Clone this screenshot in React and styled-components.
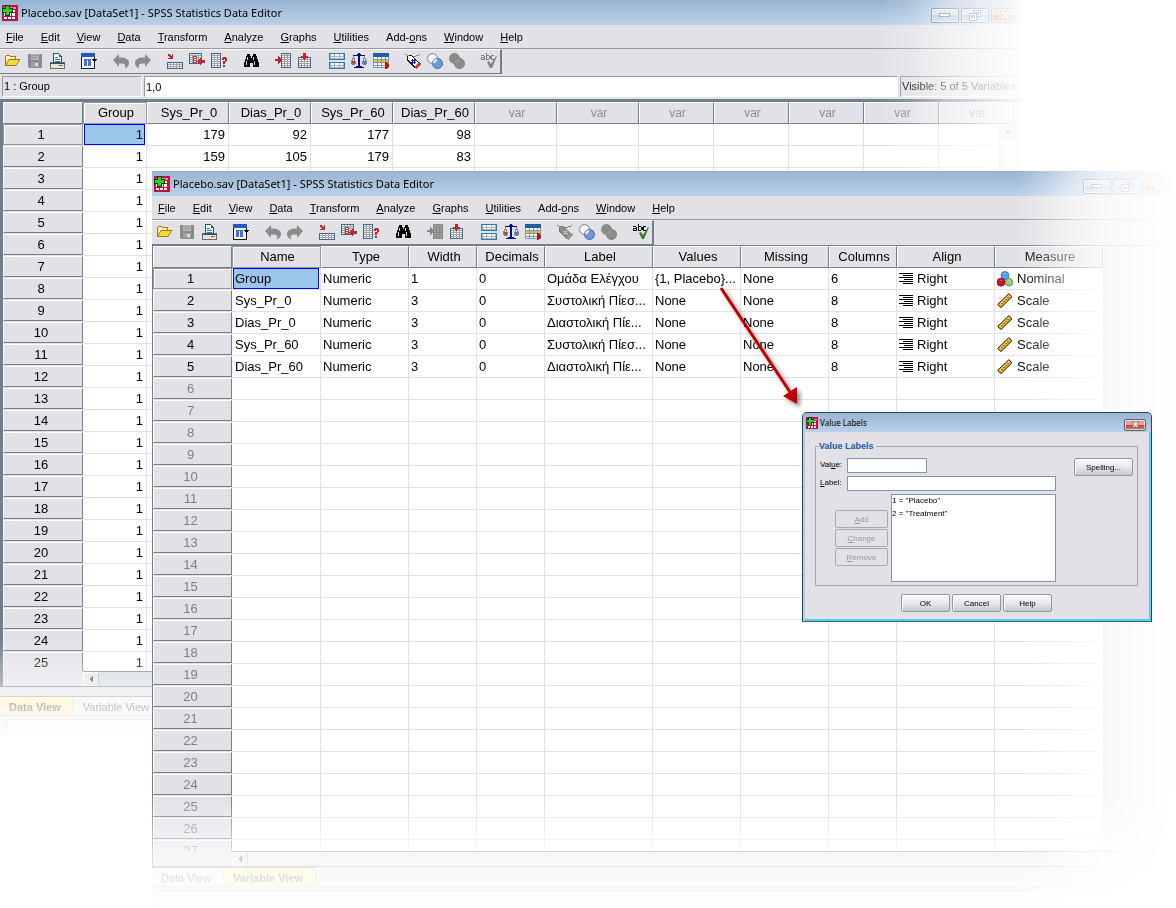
import React from 'react';
import styled, {createGlobalStyle, css} from 'styled-components';

const GlobalStyle = createGlobalStyle`
* {
    box-sizing: border-box;
}
body {
    margin: 0;
    background: #fff;
    color: #000;
    font-family: "Liberation Sans", Arial, sans-serif;
    font-size: 11px;
}
button, input, select {
    font: inherit;
    color: inherit;
}
`;

const FACE = '#e2e1e6';
const EDGE = '#6f7f90';
const LINE = '#e2e2e6';

//* Desktop and windows
const Desktop = styled.main`
position: relative;
min-height: 100vh;
overflow: hidden;
`;

//* both editor windows fade out to the right and to the bottom
const backFade = css`
mask-image:
    linear-gradient(to right, #000 calc(100% - 146px), rgba(0,0,0,.82) calc(100% - 114px), rgba(0,0,0,.48) calc(100% - 80px), rgba(0,0,0,.25) calc(100% - 42px), rgba(0,0,0,.08) calc(100% - 8px), transparent),
    linear-gradient(to bottom, #000 calc(100% - 100px), rgba(0,0,0,.75) calc(100% - 78px), rgba(0,0,0,.34) calc(100% - 36px), rgba(0,0,0,.18) calc(100% - 20px), transparent);
`;
const frontFade = css`
mask-image:
    linear-gradient(to right, #000 calc(100% - 158px), rgba(0,0,0,.7) calc(100% - 130px), rgba(0,0,0,.38) calc(100% - 100px), rgba(0,0,0,.2) calc(100% - 74px), rgba(0,0,0,.07) calc(100% - 26px), transparent),
    linear-gradient(to bottom, #000 calc(100% - 113px), rgba(0,0,0,.55) calc(100% - 80px), rgba(0,0,0,.32) calc(100% - 60px), rgba(0,0,0,.15) calc(100% - 30px), transparent);
`;

const EditorWindow = styled.section`
position: absolute;
top: ${p => p.$front ? '171px' : '0'};
left: ${p => p.$front ? '152px' : '0'};
right: ${p => p.$front ? '0' : '152px'};
background: ${FACE};
overflow: hidden;
${p => p.$front ? frontFade : backFade}
mask-composite: intersect;
`;

const TitleBar = styled.header`
display: flex;
align-items: center;
gap: 3px;
height: 25px;
padding: 0 5px 0 2px;
background: linear-gradient(#98b3d1, #b9d1ea);
`;

const Title = styled.h1`
flex: 1;
margin: 0;
font: 11px/16px "Noto Sans", "Open Sans", sans-serif;
white-space: nowrap;
`;

const Captions = styled.div`
display: flex;
gap: 2px;
margin-top: 5px;
`;

const CaptionButton = styled.button`
display: flex;
align-items: center;
justify-content: center;
width: 28px;
height: 15px;
padding: 0;
border: 1px solid #51647c;
border-radius: 2px;
box-shadow: inset 0 0 0 1px rgba(255,255,255,.6);
background: ${p => p.$close
        ? 'linear-gradient(#e5a294 45%, #c4422c 50%, #d98068)'
        : 'linear-gradient(#c6d8ec 45%, #9db8d6 50%, #bcd2ea)'};
`;

const MenuBar = styled.nav`
display: flex;
gap: 17px;
height: 24px;
padding: 0 6px;
border-bottom: 1px solid #98989c;
`;

const MenuItem = styled.button`
padding: 0;
border: 0;
background: none;
font-size: 11px;
line-height: 14px;
white-space: nowrap;
`;

const ToolStrip = styled.div`
display: flex;
width: max-content;
gap: 16px;
height: 25px;
padding: 3px 3px 0 5px;
border-top: 1px solid #fff;
border-right: 2px solid ${EDGE};
border-bottom: 1px solid ${EDGE};
`;

const ToolGroup = styled.div`
display: flex;
gap: 6px;
`;

const ToolButton = styled.button`
width: 16px;
height: 16px;
padding: 0;
border: 0;
background: none;
svg {
    display: block;
}
`;

const CellBar = styled.div`
display: flex;
gap: 2px;
padding: 2px 0 2px 2px;
line-height: 19px;
`;

const sunken = css`
height: 21px;
border: 1px solid #98989c;
border-right-color: #fff;
border-bottom-color: #fff;
white-space: nowrap;
overflow: hidden;
`;

const CellName = styled.output`
${sunken}
width: 140px;
padding-left: 1px;
`;

const CellInput = styled.input`
${sunken}
flex: 1;
min-width: 0;
padding: 0 0 0 1px;
background: #fff;
`;

const VisibleCount = styled.div`
${sunken}
width: 124px;
padding-left: 1px;
`;

//* Spreadsheet
const Sheet = styled.div`
position: relative;
border-left: ${p => p.$front ? '1px' : '3px'} solid ${EDGE};
border-top: ${p => p.$front ? '1px' : '3px'} solid ${EDGE};
border-bottom: 1px solid ${EDGE};
`;

const SheetView = styled.div`
height: ${p => p.$height}px;
overflow: hidden;
`;

const Grid = styled.table`
table-layout: fixed;
width: ${p => p.$width}px;
border-collapse: separate;
border-spacing: 0;
background: #fff;
font-size: 13px;
line-height: 20px;
white-space: nowrap;
`;

const raised = css`
border: 1px solid #fff;
border-right-color: ${EDGE};
border-bottom-color: ${EDGE};
`;
const picked = css`
border: 1px solid #98989c;
box-shadow: inset 1px 1px 0 #fff;
`;

const ColumnHead = styled.th`
height: 22px;
padding: 0 0 0 2px;
background: ${FACE};
font-weight: normal;
font-size: ${p => p.$unused ? '12px' : '13px'};
color: ${p => p.$unused ? '#8c8c90' : '#000'};
${p => p.$picked ? picked : raised}
`;

const RowHead = styled.th`
height: 22px;
padding: 0;
border-bottom: 1px solid ${LINE};
background: ${FACE};
font-weight: normal;
color: ${p => p.$unused ? '#808084' : '#000'};
`;

const RowFace = styled.div`
height: 21px;
padding-right: 4px;
line-height: 19px;
${p => p.$picked ? picked : raised}
`;

const Cell = styled.td`
height: 22px;
padding: 0 ${p => p.$picked ? '1px' : '3px'} 0 ${p => p.$picked ? '1px' : p.$name ? '3px' : '2px'};
border-right: 1px solid ${LINE};
border-bottom: 1px solid ${LINE};
text-align: ${p => p.$number ? 'right' : 'left'};
overflow: hidden;
svg {
    flex: none;
}
`;

const PickedBox = styled.div`
height: 21px;
padding: 0 1px;
border: 1px solid #0000f0;
background: #9cc5ec;
line-height: 20px;
`;

const IconText = styled.span`
display: flex;
align-items: center;
gap: 4px;
`;

const HScroll = styled.div`
display: flex;
height: 15px;
margin-left: ${p => p.$front ? '79px' : '80px'};
border-top: 1px solid ${EDGE};
background: ${p => p.$front ? '#e4e4e6' : '#cfd9dc'};
`;

const ScrollArrow = styled.button`
display: flex;
align-items: center;
justify-content: center;
width: 16px;
height: 14px;
padding: 0;
border: 1px solid #fff;
border-right-color: #9cb0b8;
border-bottom-color: ${p => p.$up ? '#9cb0b8' : '#fff'};
background: ${FACE};
`;

//* the scroll bar lies over the last column
const VScroll = styled.div`
position: absolute;
top: 22px;
bottom: 15px;
right: 9px;
width: 16px;
border-left: 1px solid #b8c0c6;
background: #e0eaea;
`;

const TabStrip = styled.div`
display: flex;
height: ${p => p.$front ? '20px' : '29px'};
padding-top: ${p => p.$front ? '0' : '9px'};
border-bottom: 1px solid #b0b0b4;
`;

const Tab = styled.button`
height: 19px;
padding: 1px 12px 0 9px;
border: 0;
border-top: 1px solid #98989c;
border-right: 1px solid #c0c0c4;
background: ${p => p.$active ? 'linear-gradient(#fff8b0, #ffdf9c)' : '#f0f0f2'};
font-weight: ${p => p.$active ? 'bold' : 'normal'};
color: #303030;
`;

const StatusBar = styled.footer`
height: 21px;
margin: 3px 0 0 6px;
border: 1px solid #a8a8ac;
border-bottom: 0;
background: #f0f0f2;
`;

//* Dialog
const Dialog = styled.section`
position: absolute;
top: 412px;
left: 802px;
width: 350px;
border: 1px solid #27475c;
border-bottom-color: #1c6f8c;
border-radius: 5px 5px 0 0;
background: ${FACE};
box-shadow: inset 2px 0 0 #b4cde6, inset -2px 0 0 #63cbea, inset 0 -2px 0 #63cbea;
font-size: 8px;
`;

const DialogTitle = styled.header`
display: flex;
align-items: center;
gap: 2px;
height: 19px;
padding: 0 5px 0 3px;
border-radius: 4px 4px 0 0;
background: linear-gradient(#9ab4d2, #b9d1ea);
font-family: "Noto Sans", "Open Sans", sans-serif;
h2 {
    flex: 1;
    margin: 0;
    font-size: 8px;
    font-weight: normal;
}
`;

const DialogClose = styled(CaptionButton)`
width: 22px;
height: 12px;
margin-top: 4px;
`;

const DialogBody = styled.form`
padding: 9px 13px 9px 12px;
`;

const Group = styled.fieldset`
display: grid;
grid-template-columns: 27px 44px 1fr 77px;
row-gap: 3px;
min-width: 0;
height: 145px;
margin: 0;
padding: 6px 4px 4px 4px;
border: 1px solid #a6a6ac;
align-content: start;
legend {
    padding: 0 2px 0 0;
    margin-left: -1px;
    color: #2258a8;
    font-size: 9px;
    font-weight: bold;
    line-height: 11px;
}
label {
    line-height: 14px;
}
`;

const TextBox = styled.input`
grid-column: 2 / 4;
width: ${p => p.$short ? '80px' : '100%'};
height: 15px;
padding: 0 1px;
border: 1px solid #8497a8;
outline: none;
background: #fff;
`;

const PushButton = styled.button`
width: ${p => p.$wide ? '59px' : '49px'};
height: 18px;
padding: 0;
border: 1px solid #8c98a6;
border-radius: 2px;
background: linear-gradient(#fafafb, #e8e8ec 50%, #c8c9d0);
box-shadow: inset 1px 1px 0 #fff;
font-size: 8px;
&:disabled {
    width: 53px;
    border-color: #a8a8ae;
    background: ${FACE};
    box-shadow: none;
    color: #98989c;
}
`;

//the button may hang a little below its row
const Spelling = styled.div`
display: flex;
justify-content: flex-end;
height: 15px;
`;

const EditButtons = styled.div`
grid-column: 1 / 3;
display: flex;
flex-direction: column;
align-items: flex-end;
gap: 1px;
padding: 16px 3px 0 0;
`;

const LabelList = styled.select`
height: 88px;
padding: 1px 0;
border: 1px solid #8497a8;
border-radius: 0;
background: #fff;
overflow: hidden;
option {
    min-height: 13px;
    padding: 0;
    line-height: 13px;
}
`;

const DialogActions = styled.div`
display: flex;
justify-content: center;
gap: 2px;
padding-top: 8px;
`;

const Pointer = styled.svg`
position: absolute;
top: 280px;
left: 712px;
filter: drop-shadow(3px 3px 2px rgba(0,0,0,.45));
pointer-events: none;
`;

//* Icons
const Svg = ({size = 16, w, h, box, children}) => (
    <svg width={w || size} height={h || size} viewBox={box || '0 0 16 16'} shapeRendering="crispEdges" aria-hidden="true">
        {children}
    </svg>
);

const AppIcon = ({size}) => (
    <Svg size={size}>
        <rect width="16" height="16" fill="#c4103c"/>
        <path d="M2 5h12v9h-12z" fill="#fff"/>
        <path d="M2 2h12v2h-12z" fill="#e78aa0"/>
        <path d="M5 4h1v11h-1zM9 4h1v11h-1zM13 4h1v11h-1zM1 7h14v1h-14zM1 11h14v1h-14z" fill="#c4103c"/>
        <path d="M3 0h5v3h3v5h-3v3h-5v-3h-3v-5h3z" fill="#0b3b0b"/>
        <path d="M4 1h3v3h3v3h-3v3h-3v-3h-3v-3h3z" fill="#2fd024"/>
    </Svg>
);

const OpenIcon = () => (
    <Svg>
        <path d="M.5 12.500V3.500l1-1h3l1 1h5v3" fill="#fff3b0" stroke="#a8731c"/>
        <path d="M.5 12.500l3.500-6h11l-4 6z" fill="#f6da3c" stroke="#a8731c" shapeRendering="auto"/>
    </Svg>
);

const SaveIcon = () => (
    <Svg>
        <path d="M1 1h14v14h-13l-1-1z" fill="#8b8b8b"/>
        <path d="M4 1h8v6h-8z" fill="#b4b4b6"/>
        <path d="M5 2h6v1h-6zM5 4h6v1h-6z" fill="#9a9a9a"/>
        <path d="M4 9h8v5h-8z" fill="#a2a2a4"/>
        <path d="M8 10h3v3h-3z" fill="#dcdcde"/>
    </Svg>
);

const PrintIcon = () => (
    <Svg>
        <path d="M1 9h14v6h-14z" fill="#e6e2dc" stroke="#6c6c6c"/>
        <path d="M1 10h15v1h-15z" fill="#4c4c4c"/>
        <path d="M4.500 9.500v-9h5l3 3v6z" fill="#fff" stroke="#24558c"/>
        <path d="M9 1h1v3h3v-1h-2v-2z" fill="#24558c"/>
        <path d="M6 4h3v1h-3zM6 6h5v1h-5zM6 8h5v1h-5z" fill="#3a7cc0"/>
        <path d="M10 12h2v1h-2z" fill="#d03030"/>
        <path d="M12 12h2v1h-2z" fill="#38b038"/>
    </Svg>
);

const RecallIcon = () => (
    <Svg>
        <path d="M1 4h13v12h-13z" fill="#f4f4f8"/>
        <path d="M0 0h14v4h-14z" fill="#2458c0"/>
        <path d="M0 4h1v11h-1zM13 4h1v3h-1zM0 15h14v1h-14zM13 9h1v7h-1z" fill="#1c1c1c"/>
        <path d="M3 6h7v1h-7zM3 7h3v6h-3zM7 7h3v6h-3z" fill="#3c74d8"/>
        <path d="M11 6h5v1h-1v1h-1v1h-1v-1h-1v-1h-1z" fill="#000"/>
    </Svg>
);

const UndoIcon = ({flip}) => (
    <Svg>
        <path
            transform={flip ? 'translate(16 0) scale(-1 1)' : undefined}
            d="M0 7l6-6v3.500c6-.5 10 1.500 10 5.500 0 2.500-1.500 4.500-4.500 5.500 2-3.500.5-5.500-5.500-5v3.500z"
            fill="#8b8b8b"
            shapeRendering="auto"/>
    </Svg>
);

//small data table used by many of the icons
const Sheetlet = ({x, y, cols, rows, line = '#a2a2a4', frame = '#3c6898'}) => {
    const w = cols * 3 + 1;
    const h = rows * 2 + 1;
    return (
        <g>
            <rect x={x} y={y} width={w} height={h} fill={line}/>
            {Array.from({length: cols * rows}, (_, i) => (
                <rect key={i} x={x + 1 + (i % cols) * 3} y={y + 1 + Math.floor(i / cols) * 2} width="2" height="1" fill="#fff"/>
            ))}
            <path d={`M${x} ${y}h${w}v${h}h-${w}zM${x + 1} ${y + 1}v${h - 2}h${w - 2}v-${h - 2}z`} fill={frame} fillRule="evenodd"/>
        </g>
    );
};

const GotoCaseIcon = () => (
    <Svg>
        <Sheetlet x={0} y={9} cols={5} rows={3}/>
        <path d="M1 1h2v1h1v1h1v-2h1v5h-5v-1h2v-1h-1v-1h-1z" fill="#c8202c"/>
    </Svg>
);

const GotoVariableIcon = () => (
    <Svg>
        <Sheetlet x={0} y={0} cols={4} rows={5}/>
        <path d="M4 3h4v7h-4z" fill="#b04048"/>
        <path d="M5 4h2v1h-2zM5 6h2v1h-2zM5 8h2v1h-2z" fill="#fff"/>
        <path d="M8 8l4-4v3h4v3h-4v3z" fill="#c8202c"/>
    </Svg>
);

const VariablesIcon = () => (
    <Svg>
        <Sheetlet x={0} y={0} cols={3} rows={7}/>
        <path d="M11 5h1v-1h3v1h1v3h-1v1h-1v2h-2v-3h2v-2h-1v1h-2zM12 12h2v2h-2z" fill="#c8202c"/>
    </Svg>
);

const FindIcon = () => (
    <Svg>
        <path d="M4 1h3v2h1v2h1v-2h1v-2h3v2h1v3h1v3h1v5h-6v-4h-3v4h-6v-5h1v-3h1v-3h1z" fill="#050505"/>
        <path d="M4 4h1v3h-1zM3 8h1v4h-1zM10 4h1v3h-1zM11 8h1v4h-1z" fill="#d8d8d8"/>
    </Svg>
);

const InsertCaseIcon = ({off}) => (
    <Svg>
        <Sheetlet x={6} y={0} cols={3} rows={7} frame={off ? '#808080' : undefined} line={off ? '#8a8a8a' : undefined}/>
        {off && <path d="M6 0h10v15h-10z" fill="#888" opacity=".75"/>}
        <path d="M0 6h3v-3h1v1h1v1h1v1h1v2h-1v1h-1v1h-1v1h-1v-3h-3z" fill={off ? '#858585' : '#c8202c'}/>
    </Svg>
);

const InsertVariableIcon = () => (
    <Svg>
        <Sheetlet x={1} y={4} cols={4} rows={5}/>
        <path d="M6 0h3v3h2v1h-1v1h-1v1h-1v1h-1v-1h-1v-1h-1v-1h-1v-1h2z" fill="#c8202c"/>
    </Svg>
);

const SplitIcon = () => (
    <Svg>
        <path d="M0 0h16v7h-16zM0 9h16v7h-16z" fill="#2a78b4"/>
        <path d="M1 1h14v5h-14zM1 10h14v5h-14z" fill="#a8b4bc"/>
        <path d="M2 1h3v2h-3zM6 1h4v2h-4zM11 1h3v2h-3zM2 4h3v1h-3zM6 4h4v1h-4zM11 4h3v1h-3zM2 10h3v2h-3zM6 10h4v2h-4zM11 10h3v2h-3zM2 13h3v1h-3zM6 13h4v1h-4zM11 13h3v1h-3z" fill="#fff"/>
    </Svg>
);

const WeightIcon = () => (
    <Svg>
        <path d="M2 3h1v2h1v3h1v2h-1v-2h-1v-2h-1v2h-1v2h-1v-3h1v-2h1zM13 3h1v2h1v2h1v3h-1v-2h-1v-2h-1v2h-1v2h-1v-2h1v-3h1z" fill="#8c8c92"/>
        <path d="M2 2h4v-1h1v-1h2v1h1v1h4v1h-5v10h2v1h2v1h-10v-1h2v-1h2v-10h-5z" fill="#000c88"/>
        <path d="M1 8h3v2h-3z" fill="#e02828"/>
        <path d="M12 8h3v2h-3z" fill="#3080e8"/>
        <path d="M0 10h5v1h-1v1h-3v-1h-1zM11 10h5v1h-1v1h-3v-1h-1z" fill="#7c7c84"/>
    </Svg>
);

const SelectIcon = () => (
    <Svg>
        <path d="M0 0h16v15h-16z" fill="#7c98b0"/>
        <path d="M0 0h16v4h-16z" fill="#2060a0"/>
        <path d="M1 4h3v2h-3zM5 4h3v2h-3zM9 4h3v2h-3zM13 4h2v2h-2zM1 10h3v2h-3zM5 10h3v2h-3zM9 10h3v2h-3zM1 13h3v1h-3zM5 13h3v1h-3zM9 13h3v1h-3z" fill="#fff"/>
        <path d="M1 7h3v2h-3zM5 7h3v2h-3zM9 7h3v2h-3zM13 7h2v2h-2z" fill="#f4c020"/>
        <path d="M12 9h2v1h1v1h1v3h-1v1h-1v1h-2z" fill="#c01018"/>
    </Svg>
);

const LabelsIcon = ({off}) => (
    <Svg>
        <path d="M2.500 2.500h4l7.500 7.500-4 4.500-7-7z" fill={off ? '#8c8c8c' : '#fff'} stroke={off ? '#7c7c7c' : '#181818'}/>
        <path d="M9 14l5-5 2 2-4.500 5z" fill={off ? '#9a9a9a' : '#d83838'}/>
        <path d="M0 1h2v1h2v1h-2v-1h-2zM8 3h3v-1h3v-1h1v1h-1v1h-3v1h-3z" fill="#8a8a8a"/>
        <path d="M7 6h1v5h-1zM9 6h1v5h-1zM6 7h5v1h-5zM6 9h5v1h-5z" fill={off ? '#b8b8b8' : '#1818a0'}/>
    </Svg>
);

const SetsIcon = ({off}) => (
    <svg width="16" height="16" viewBox="0 0 16 16" aria-hidden="true">
        <circle cx="5.500" cy="5.500" r="5" fill={off ? '#8b8b8b' : '#f4f6fa'} stroke={off ? '#8b8b8b' : '#76808c'}/>
        <circle cx="10.500" cy="10.500" r="5" fill={off ? '#8b8b8b' : '#6f9ad8'} stroke={off ? '#808080' : '#4c6c9c'}/>
        <path d="M5.800 10.400a5 5 0 0 1 4.600-4.700a5 5 0 0 1-4.600 4.700z" fill={off ? '#9a9a9a' : '#dce8f8'}/>
    </svg>
);

const SpellIcon = ({off}) => (
    <Svg>
        <path
            d="M0 2h3v1h1v4h-4v-3h3v-1h-3zM1 5v1h2v-1zM5 0h1v2h2v1h1v3h-1v1h-3zM6 3v3h2v-3zM10 2h3v1h-2v3h2v1h-3v-1h-1v-3h1z"
            fill={off ? '#808080' : '#101010'}
            fillRule="evenodd"/>
        <path d="M6 9l2-1 2 3 5-8h1l-5 12h-2z" fill={off ? '#808080' : '#3c7c28'} shapeRendering="auto"/>
    </Svg>
);

const AlignIcon = () => (
    <Svg w={14} h={12} box="0 0 14 12">
        <path d="M0 0h14v1h-14zM4 2h10v1h-10zM0 4h14v1h-14zM5 6h9v1h-9zM0 8h14v1h-14zM4 10h10v1h-10z" fill="#000"/>
    </Svg>
);

const NominalIcon = () => (
    <svg width="16" height="16" viewBox="0 0 16 16" aria-hidden="true">
        <circle cx="8" cy="4.500" r="4" fill="#5ba0ee" stroke="#2f68b0" strokeWidth=".8"/>
        <circle cx="4" cy="11.200" r="4" fill="#c8142c" stroke="#801020" strokeWidth=".8"/>
        <circle cx="12" cy="11.200" r="3.800" fill="#92d07c" stroke="#4c8c3c" strokeWidth=".8"/>
        <path d="M6.500 3a2 1.500 0 0 1 3 0zM2.500 9.500a2 1.500 0 0 1 3 0zM10.500 9.500a2 1.500 0 0 1 3 0z" fill="#fff" opacity=".6"/>
    </svg>
);

const ScaleIcon = () => (
    <svg width="16" height="16" viewBox="0 0 16 16" aria-hidden="true">
        <path d="M.7 11.500L11.800.7l3.200 3L4 14.500z" fill="#f0b820" stroke="#181400"/>
        <path d="M2.500 11.500L12 2.500" stroke="#fbe68c"/>
        <path d="M4.500 10l1 1M6.500 8l1 1M8.500 6l1 1M10.500 4l1 1" stroke="#181400"/>
    </svg>
);

const Minimize = () => (
    <Svg w={12} h={6} box="0 0 12 6">
        <path d="M.5 1.500h10v3h-10z" fill="#fff" stroke="#5a6270"/>
    </Svg>
);
const Restore = () => (
    <Svg w={12} h={11} box="0 0 12 11">
        <path d="M4.500.5h7v6h-7z" fill="#fff" stroke="#5a6270"/>
        <path d="M6.500 2.500h3v2h-3z" fill="#b8c8dc" stroke="#5a6270"/>
        <path d="M.5 3.500h7v7h-7z" fill="#fff" stroke="#5a6270"/>
        <path d="M2.500 5.500h3v2h-3z" fill="#b8c8dc" stroke="#5a6270"/>
    </Svg>
);
const Close = ({w = 12, h = 10}) => (
    <svg width={w} height={h} viewBox="0 0 12 10" aria-hidden="true">
        <path d="M1 1h3l2 2 2-2h3L8 5l3 4H8L6 7 4 9H1l3-4z" fill="#fff" stroke="#5c5058" strokeWidth=".9"/>
    </svg>
);

//* Data
const menus = [
    ['', 'F', 'ile'], ['', 'E', 'dit'], ['', 'V', 'iew'], ['', 'D', 'ata'], ['', 'T', 'ransform'], ['', 'A', 'nalyze'],
    ['', 'G', 'raphs'], ['', 'U', 'tilities'], ['Add-', 'o', 'ns'], ['', 'W', 'indow'], ['', 'H', 'elp']
];

const dataColumns = [
    {name: 'Group', width: 64},
    {name: 'Sys_Pr_0', width: 82},
    {name: 'Dias_Pr_0', width: 82},
    {name: 'Sys_Pr_60', width: 82},
    {name: 'Dias_Pr_60', width: 82},
    {width: 82}, {width: 82}, {width: 75}, {width: 75}, {width: 75}, {width: 75}, {width: 75}
];
const cases = [[1, 179, 92, 177, 98], [1, 159, 105, 179, 83]];
while (cases.length < 25) cases.push([1]);

const variableColumns = [
    ['Name', 89], ['Type', 88], ['Width', 68], ['Decimals', 68], ['Label', 108],
    ['Values', 88], ['Missing', 88], ['Columns', 68], ['Align', 98], ['Measure', 108]
];
const variables = [
    ['Group', 'Numeric', 1, 0, 'Ομάδα Ελέγχου', '{1, Placebo}...', 'None', 6, 'Right', 'Nominal'],
    ['Sys_Pr_0', 'Numeric', 3, 0, 'Συστολική Πίεσ...', 'None', 'None', 8, 'Right', 'Scale'],
    ['Dias_Pr_0', 'Numeric', 3, 0, 'Διαστολική Πίε...', 'None', 'None', 8, 'Right', 'Scale'],
    ['Sys_Pr_60', 'Numeric', 3, 0, 'Συστολική Πίεσ...', 'None', 'None', 8, 'Right', 'Scale'],
    ['Dias_Pr_60', 'Numeric', 3, 0, 'Διαστολική Πίε...', 'None', 'None', 8, 'Right', 'Scale']
];
const icons = {
    Right: <AlignIcon/>,
    Nominal: <NominalIcon/>,
    Scale: <ScaleIcon/>
};

const Hotkey = ({parts}) => <>{parts[0]}<u>{parts[1]}</u>{parts[2]}</>;

const WindowTop = ({front}) => {
    const tools = [
        [['Open', <OpenIcon/>], ['Save', <SaveIcon/>], ['Print', <PrintIcon/>]],
        [['Recall dialog', <RecallIcon/>]],
        [['Undo', <UndoIcon/>], ['Redo', <UndoIcon flip/>]],
        [['Go to case', <GotoCaseIcon/>], ['Go to variable', <GotoVariableIcon/>], ['Variables', <VariablesIcon/>]],
        [['Find', <FindIcon/>]],
        [['Insert case', <InsertCaseIcon off={front}/>], ['Insert variable', <InsertVariableIcon/>]],
        [['Split file', <SplitIcon/>], ['Weight cases', <WeightIcon/>], ['Select cases', <SelectIcon/>]],
        [['Value labels', <LabelsIcon off={front}/>], ['Use sets', <SetsIcon/>], ['Show all', <SetsIcon off/>]],
        [['Spelling', <SpellIcon off={!front}/>]]
    ];
    return (
        <>
            <TitleBar>
                <AppIcon/>
                <Title>Placebo.sav [DataSet1] - SPSS Statistics Data Editor</Title>
                <Captions>
                    <CaptionButton aria-label="Minimize"><Minimize/></CaptionButton>
                    <CaptionButton aria-label="Restore"><Restore/></CaptionButton>
                    <CaptionButton aria-label="Close" $close><Close/></CaptionButton>
                </Captions>
            </TitleBar>
            <MenuBar>
                {menus.map(parts => <MenuItem key={parts.join('')}><Hotkey parts={parts}/></MenuItem>)}
            </MenuBar>
            <ToolStrip>
                {tools.map((group, i) => (
                    <ToolGroup key={i}>
                        {group.map(([name, icon]) => <ToolButton key={name} aria-label={name}>{icon}</ToolButton>)}
                    </ToolGroup>
                ))}
            </ToolStrip>
        </>
    );
};

const SheetScroll = ({front}) => (
    <HScroll $front={front}>
        <ScrollArrow aria-label="Scroll left">
            <Svg w={4} h={8} box="0 0 4 8"><path d="M4 0v8l-4-4z" fill="#404040"/></Svg>
        </ScrollArrow>
    </HScroll>
);

const DataEditor = () => (
    <EditorWindow>
        <WindowTop/>
        <CellBar>
            <CellName>1 : Group</CellName>
            <CellInput aria-label="Cell value" defaultValue="1,0"/>
            <VisibleCount>Visible: 5 of 5 Variables</VisibleCount>
        </CellBar>
        <Sheet>
            <SheetView $height={569}>
                <Grid $width={1011}>
                    <colgroup>
                        <col width="80"/>
                        {dataColumns.map((c, i) => <col key={i} width={c.width}/>)}
                    </colgroup>
                    <thead>
                        <tr>
                            <ColumnHead/>
                            {dataColumns.map((c, i) => (
                                <ColumnHead key={i} $picked={i === 0} $unused={!c.name}>{c.name || 'var'}</ColumnHead>
                            ))}
                        </tr>
                    </thead>
                    <tbody>
                        {cases.map((values, row) => (
                            <tr key={row}>
                                <RowHead><RowFace $picked={row === 0}>{row + 1}</RowFace></RowHead>
                                {dataColumns.map((c, i) => row === 0 && i === 0
                                    ? <Cell key={i} $number $picked><PickedBox>{values[i]}</PickedBox></Cell>
                                    : <Cell key={i} $number>{values[i]}</Cell>)}
                            </tr>
                        ))}
                    </tbody>
                </Grid>
            </SheetView>
            <SheetScroll/>
            <VScroll>
                <ScrollArrow aria-label="Scroll up" $up>
                    <Svg w={8} h={4} box="0 0 8 4"><path d="M0 4h8l-4-4z" fill="#404040"/></Svg>
                </ScrollArrow>
            </VScroll>
        </Sheet>
        <TabStrip>
            <Tab $active>Data View</Tab>
            <Tab>Variable View</Tab>
        </TabStrip>
        <StatusBar/>
    </EditorWindow>
);

const VariableEditor = () => {
    const rows = Array.from({length: 27}, (_, i) => variables[i] || []);
    return (
        <EditorWindow $front>
            <WindowTop front/>
            <Sheet $front>
                <SheetView $height={605}>
                    <Grid $width={950}>
                        <colgroup>
                            <col width="79"/>
                            {variableColumns.map(([name, width]) => <col key={name} width={width}/>)}
                        </colgroup>
                        <thead>
                            <tr>
                                <ColumnHead/>
                                {variableColumns.map(([name], i) => <ColumnHead key={name} $picked={i === 0}>{name}</ColumnHead>)}
                            </tr>
                        </thead>
                        <tbody>
                            {rows.map((values, row) => (
                                <tr key={row}>
                                    <RowHead $unused={!values.length}><RowFace $picked={row === 0}>{row + 1}</RowFace></RowHead>
                                    {variableColumns.map(([name], i) => {
                                        if (row === 0 && i === 0) {
                                            return <Cell key={name} $picked><PickedBox>{values[i]}</PickedBox></Cell>;
                                        }
                                        return (
                                            <Cell key={name} $name={i === 0}>
                                                {icons[values[i]]
                                                    ? <IconText>{icons[values[i]]}{values[i]}</IconText>
                                                    : values[i]}
                                            </Cell>
                                        );
                                    })}
                                </tr>
                            ))}
                        </tbody>
                    </Grid>
                </SheetView>
                <SheetScroll front/>
            </Sheet>
            <TabStrip $front>
                <Tab>Data View</Tab>
                <Tab $active>Variable View</Tab>
            </TabStrip>
            <StatusBar/>
        </EditorWindow>
    );
};

const ValueLabels = () => (
    <Dialog>
        <DialogTitle>
            <AppIcon size={12}/>
            <h2>Value Labels</h2>
            <DialogClose type="button" aria-label="Close" $close><Close w={9} h={7}/></DialogClose>
        </DialogTitle>
        <DialogBody onSubmit={e => e.preventDefault()}>
            <Group>
                <legend>Value Labels</legend>
                <label htmlFor="value">Val<u>u</u>e:</label>
                <TextBox id="value" $short autoFocus/>
                <Spelling><PushButton type="button" $wide>Spelling...</PushButton></Spelling>
                <label htmlFor="label"><u>L</u>abel:</label>
                <TextBox id="label"/>
                <EditButtons>
                    <PushButton type="button" disabled><u>A</u>dd</PushButton>
                    <PushButton type="button" disabled><u>C</u>hange</PushButton>
                    <PushButton type="button" disabled><u>R</u>emove</PushButton>
                </EditButtons>
                <LabelList size={6} aria-label="Labels">
                    <option>1 = "Placebo"</option>
                    <option>2 = "Treatment"</option>
                </LabelList>
            </Group>
            <DialogActions>
                <PushButton>OK</PushButton>
                <PushButton type="button">Cancel</PushButton>
                <PushButton type="button">Help</PushButton>
            </DialogActions>
        </DialogBody>
    </Dialog>
);

const App = () => (
    <Desktop>
        <GlobalStyle/>
        <DataEditor/>
        <VariableEditor/>
        <Pointer width="96" height="134" viewBox="0 0 96 134" aria-hidden="true">
            <path d="M9 8L78 112" stroke="#c00000" strokeWidth="3"/>
            <path d="M85 124L71 116L85 107z" fill="#c00000"/>
        </Pointer>
        <ValueLabels/>
    </Desktop>
);

export default App;
